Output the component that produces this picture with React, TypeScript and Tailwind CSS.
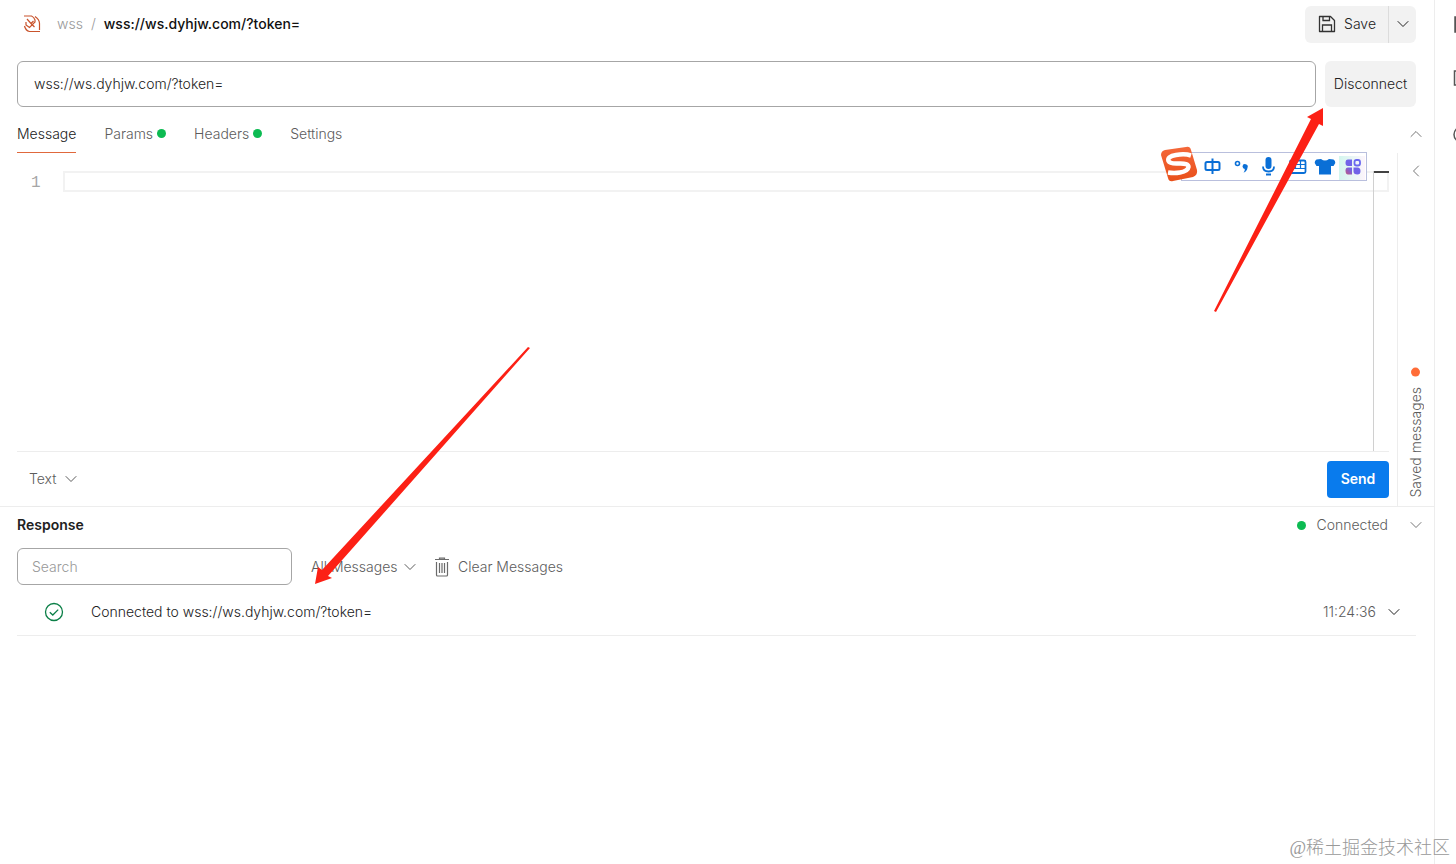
import React, { useState } from 'react';
import { ChevronDown, ChevronLeft, ChevronUp } from 'lucide-react';

const TABS = [
  { name: 'Message', dot: false },
  { name: 'Params', dot: true },
  { name: 'Headers', dot: true },
  { name: 'Settings', dot: false },
];

const SocketIcon = () => (
  <svg width="18" height="18" viewBox="0 0 18 18" fill="none" stroke="#c9532c" strokeWidth="1.200">
    <path d="M1 1h7.500q2.500 1 3.500 4v2L6.500 12.500 3 10V7" />
    <path d="M4 4l4 4.500 3.500 3.500M8 8.500L10.500 6" />
    <path d="M12 1.500q4.500 3 4.500 7v6.500M1.500 11q1 4.500 5 5.500h10.500" />
  </svg>
);

const SaveIcon = () => (
  <svg width="18" height="18" viewBox="0 0 18 18" fill="none" stroke="#333" strokeWidth="1.3">
    <path d="M1.500 1.500h11l4 4v11h-15z" strokeLinejoin="round" />
    <path d="M5 1.500v4h6.500v-4M4.500 16.500V10h9v6.500" />
  </svg>
);

const TrashIcon = () => (
  <svg width="16" height="20" viewBox="0 0 16 20" fill="none" stroke="#6b6b6b" strokeWidth="1.200">
    <path d="M1 2.500h14M5.500 2.500V1.200h5v1.300M2.500 5v13q0 1 1 1h9q1 0 1-1V5M5.500 6v10M8 6v10M10.500 6v10" />
  </svg>
);

const OkIcon = () => (
  <svg width="20" height="20" viewBox="0 0 20 20" fill="none" stroke="#0b7f47" strokeWidth="1.300">
    <circle cx="10" cy="10" r="8.500" />
    <path d="M5.800 10.200l3 2.800 5.400-5.400" />
  </svg>
);

// Floating input method bar
const ImeBar = () => (
  <div className="absolute right-[89px] top-[146px] h-9 w-[206px]">
    <div className="absolute right-0 top-[6px] h-[29px] w-[186px] border border-[#b9bfdd] bg-white" />
    <svg className="relative" width="206" height="36" viewBox="0 0 206 36" fill="none">
      <defs>
        <linearGradient id="logo" x1="0" y1="0" x2="0" y2="1">
          <stop offset="0" stopColor="#f4683a" />
          <stop offset="1" stopColor="#e9501a" />
        </linearGradient>
        <linearGradient id="glow" x1="0" y1="0" x2="1" y2="0">
          <stop offset="0" stopColor="#d3f6ee" />
          <stop offset="1" stopColor="#fdf5fc" />
        </linearGradient>
        <linearGradient id="grid" x1="0" y1="1" x2="1" y2="0">
          <stop offset="0" stopColor="#c05a80" />
          <stop offset="0.35" stopColor="#7361e6" />
          <stop offset="1" stopColor="#6a68f0" />
        </linearGradient>
      </defs>
      <path d="M4 4L25 1q4-1 5 3l6 20q1 5-4 7l-20 4q-4 1-5-3L0 9q0-4 4-5z" fill="url(#logo)" />
      <path d="M30 9.500Q24 7.500 15 9q-9 1.500-7.500 6 1.500 3 10 2.500 10-.500 10 3.500-.5 4-8.500 5.500-6 1-12 0" stroke="#fff" strokeWidth="4.500" />
      <g stroke="#0a6fd6" strokeWidth="2">
        <rect x="44.500" y="16" width="14" height="8" rx="1.500" />
        <path d="M51.500 12.500v15.500" />
        <circle cx="76.500" cy="17.500" r="2" strokeWidth="1.600" />
        <path d="M102 20.500q0 5 5.500 5t5.500-5M105 28.500h5" strokeWidth="1.800" />
        <rect x="129" y="14.500" width="15.500" height="12.500" rx="1.500" strokeWidth="1.800" />
        <path d="M129 18.500h15M129 22.500h15M134.500 15v8M139.500 15v8" strokeWidth="1.200" />
      </g>
      <g fill="#0a6fd6">
        <path d="M81.500 20.500a2.600 2.600 0 1 1 5 1.200q-.5 3.800-4 4.800 1.500-1.500 1.300-3.500-2-.4-2.300-2.500z" />
        <rect x="104.500" y="11" width="6" height="12" rx="3" />
        <path d="M160 13q4 3 8 0l4.500.5q2 1 1.800 3.500l-1.800 3h-2.500v8.500h-12V20h-2.500l-1.800-3q-.2-2.500 1.800-3.500z" />
      </g>
      <rect x="178" y="10" width="26" height="24" fill="url(#glow)" />
      <path d="M187 13.500h4v6.500h-4q-2.500 0-2.500-3.200t2.500-3.300zM184.500 24.500q0-3 2.500-3h4v7h-4q-2.500 0-2.500-4zM192.500 21.500h4q3 0 3 3.500t-3 3.500q-4 0-4-3z" fill="url(#grid)" />
      <rect x="193.500" y="14" width="5.500" height="5.500" rx="2" stroke="#6a68f0" strokeWidth="1.800" />
    </svg>
  </div>
);

const Arrows = () => (
  <svg className="pointer-events-none absolute left-0 top-0" width="1456" height="640" viewBox="0 0 1456 640" fill="#fc2015">
    <path d="M315 584L318 567L322 570L528 347L530 348L328 576L332 578Z" />
    <path d="M1323 108L1307 117L1311 119L1214 311L1216 312L1319 124L1323 126Z" />
  </svg>
);

const SideRail = () => (
  <aside className="w-[22px] shrink-0 overflow-hidden border-l border-[#ededed] pl-[18px] pt-4">
    <svg width="20" height="130" viewBox="0 0 20 130" fill="none" stroke="#555" strokeWidth="1.500">
      <path d="M2 1h14v15H2z" fill="#555" />
      <path d="M1.500 55h15v14h-15z" />
      <circle cx="8.500" cy="118.500" r="7.500" />
    </svg>
  </aside>
);

const App: React.FC = () => {
  const [url, setUrl] = useState('wss://ws.dyhjw.com/?token=');
  const [message, setMessage] = useState('');
  const [search, setSearch] = useState('');
  const [tab, setTab] = useState('Message');

  return (
    <div className="relative flex min-h-screen overflow-hidden bg-white font-['Inter',sans-serif] text-sm font-light leading-5 text-[#5c5c5c]">
      <main className="min-w-0 flex-1">
        {/* Title bar */}
        <header className="flex h-12 items-center pl-[23px] pr-[18px]">
          <SocketIcon />
          <nav className="ml-4 flex flex-1 gap-2">
            <a href="#wss" className="text-[#999]">wss</a>
            <span className="text-[#999]">/</span>
            <h1 className="font-medium text-[#111]">wss://ws.dyhjw.com/?token=</h1>
          </nav>
          <div className="flex h-[37px] overflow-hidden rounded-md bg-[#f2f2f2] text-[#212121]">
            <button className="flex items-center gap-2 pl-[13px] pr-3">
              <SaveIcon />
              Save
            </button>
            <button aria-label="Save options" className="flex w-7 items-center justify-center border-l border-[#dcdcdc]">
              <ChevronDown size={20} strokeWidth={1.2} />
            </button>
          </div>
        </header>

        {/* Address */}
        <div className="mt-[13px] flex h-[46px] gap-[9px] pl-[17px] pr-[18px]">
          <input
            aria-label="Server URL"
            value={url}
            onChange={(e) => setUrl(e.target.value)}
            className="min-w-0 flex-1 rounded-md border border-[#a6a6a6] px-4 text-[#212121] outline-none"
          />
          <button className="w-[91px] rounded-md bg-[#f2f2f2] text-[#212121]">Disconnect</button>
        </div>

        {/* Tabs */}
        <div className="flex h-[46px] items-stretch justify-between pl-[17px] pr-2">
          <div className="flex gap-7" role="tablist">
            {TABS.map((t) => (
              <button
                key={t.name}
                role="tab"
                aria-selected={tab === t.name}
                onClick={() => setTab(t.name)}
                className={`flex items-center gap-1 border-b pt-2 ${tab === t.name ? 'border-[#e0683c] text-[#212121]' : 'border-transparent'}`}
              >
                {t.name}
                {t.dot && <span className="h-[9px] w-[9px] rounded-full bg-[#0cbb52]" />}
              </button>
            ))}
          </div>
          <button aria-label="Collapse request" className="pt-2"><ChevronUp size={20} strokeWidth={1} /></button>
        </div>

        <div className="flex h-[354px] border-b border-[#ededed]">
          <section className="flex min-w-0 flex-1 flex-col pl-[17px] pr-2">
            <div className="relative flex flex-1 border-b border-[#ededed] pt-[18px]">
              <span className="w-[46px] pl-[14px] font-['Liberation_Mono',monospace] text-base leading-6 text-[#a6a6a6]">1</span>
              <textarea
                aria-label="Message"
                rows={1}
                value={message}
                onChange={(e) => setMessage(e.target.value)}
                className="h-[21px] flex-1 resize-none overflow-hidden border-2 border-[#f2f2f2] px-1 font-['Liberation_Mono',monospace] outline-none"
              />
              <div className="absolute bottom-0 right-0 top-[18px] w-4 border-l border-[#d0d0d0]">
                <div className="h-[2px] bg-[#424242]" />
              </div>
            </div>
            <div className="flex h-[54px] items-center justify-between pl-3">
              <label className="flex items-center gap-1">
                <select aria-label="Message format" className="appearance-none bg-transparent outline-none">
                  <option>Text</option>
                </select>
                <ChevronDown size={20} strokeWidth={1.2} />
              </label>
              <button className="h-[37px] w-[62px] rounded bg-[#097bed] font-semibold text-white">Send</button>
            </div>
          </section>
          <aside className="flex w-[37px] flex-col items-center justify-between border-l border-[#ededed] pb-2 pt-2">
            <button aria-label="Show saved messages"><ChevronLeft size={20} strokeWidth={1} /></button>
            <button className="flex rotate-180 items-center gap-[10px] [writing-mode:vertical-rl]">
              Saved messages
              <span className="h-[9px] w-[9px] rounded-full bg-[#ff6c37]" />
            </button>
          </aside>
        </div>

        {/* Response */}
        <section>
          <div className="flex h-9 items-center pl-[17px] pr-2">
            <h2 className="flex-1 font-semibold text-[#212121]">Response</h2>
            <span className="mr-[10px] h-[9px] w-[9px] rounded-full bg-[#0cbb52]" />
            <span>Connected</span>
            <button aria-label="Collapse response" className="ml-[18px]"><ChevronDown size={20} strokeWidth={1} /></button>
          </div>
          <div className="mt-[5px] flex h-[37px] items-center pl-[17px]">
            <input
              aria-label="Search messages"
              placeholder="Search"
              value={search}
              onChange={(e) => setSearch(e.target.value)}
              className="h-full w-[275px] rounded-md border border-[#a6a6a6] px-[14px] text-[#212121] outline-none placeholder:text-[#999]"
            />
            <label className="ml-[19px] flex items-center gap-[2px]">
              <select aria-label="Message filter" className="appearance-none bg-transparent outline-none">
                <option>All Messages</option>
              </select>
              <ChevronDown size={20} strokeWidth={1.2} />
            </label>
            <button className="ml-[14px] flex items-center gap-2">
              <TrashIcon />
              Clear Messages
            </button>
          </div>
          <ul className="ml-[17px] mr-[18px]">
            <li className="flex h-[51px] items-center border-b border-[#ededed] pl-[27px] pr-3 pt-[3px]">
              <OkIcon />
              <span className="ml-[27px] flex-1 text-[#212121]">Connected to wss://ws.dyhjw.com/?token=</span>
              <time>11:24:36</time>
              <button aria-label="Show details" className="ml-2 text-[#212121]"><ChevronDown size={20} strokeWidth={1.2} /></button>
            </li>
          </ul>
        </section>
      </main>

      <SideRail />
      <ImeBar />
      <Arrows />
      <div className="absolute bottom-1 right-[6px] font-['Liberation_Serif','Noto_Sans_CJK_SC',serif] text-lg font-light leading-6 text-[#999]">
        @稀土掘金技术社区
      </div>
    </div>
  );
};

export default App;
